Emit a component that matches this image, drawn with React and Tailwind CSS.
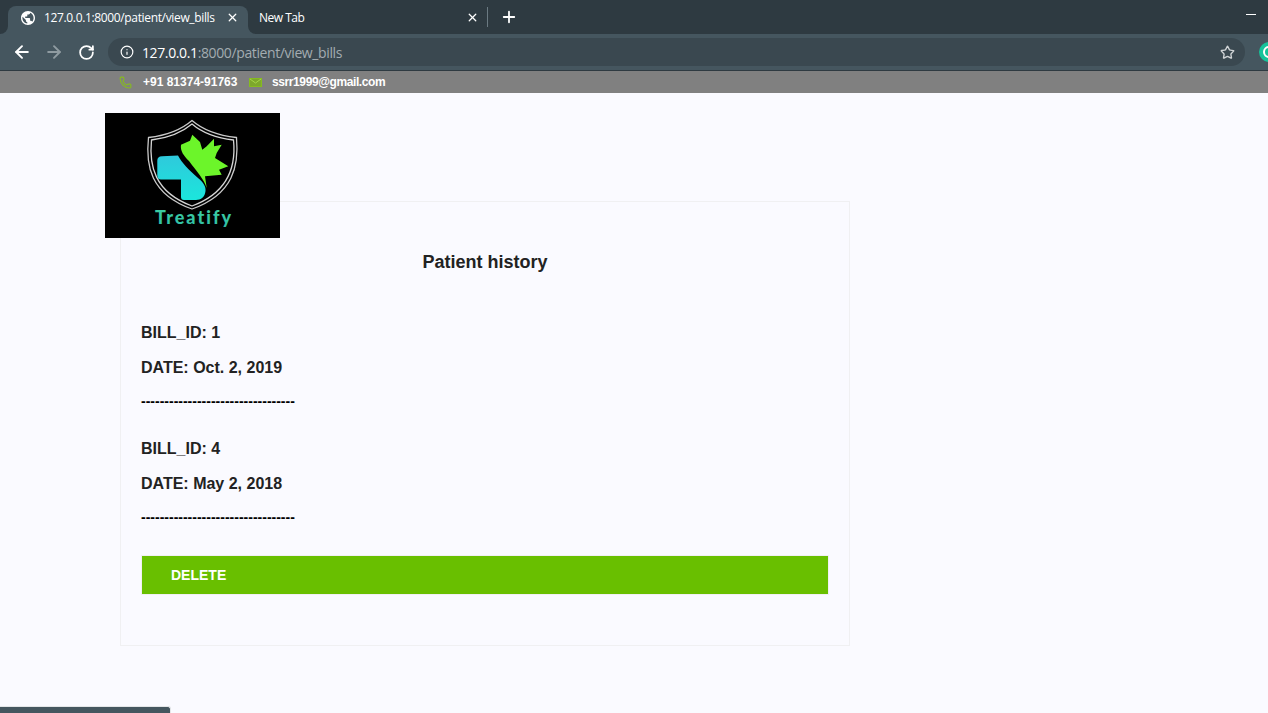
import { ArrowLeft, ArrowRight, RotateCw, Info, Star, X, Plus, Phone } from 'lucide-react'

const bills = [
  { id: 1, date: 'Oct. 2, 2019' },
  { id: 4, date: 'May 2, 2018' },
]

function GlobeIcon() {
  return (
    <svg viewBox="2 2 20 20" className="w-[14px] h-[14px] shrink-0" fill="#fff">
      <path d="M12 2C6.48 2 2 6.48 2 12s4.48 10 10 10 10-4.48 10-10S17.52 2 12 2zm-1 17.93c-3.95-.49-7-3.85-7-7.93 0-.62.08-1.21.21-1.79L9 15v1c0 1.1.9 2 2 2v1.93zm6.9-2.54c-.26-.81-1-1.39-1.9-1.39h-1v-3c0-.55-.45-1-1-1H8v-2h2c.55 0 1-.45 1-1V7h2c1.1 0 2-.9 2-2v-.41c2.93 1.19 5 4.06 5 7.41 0 2.08-.8 3.97-2.1 5.39z" />
    </svg>
  )
}

function MailIcon() {
  return (
    <svg viewBox="0 0 13 9" className="w-[13px] h-[9px] shrink-0">
      <rect x="0.5" y="0.5" width="12" height="8" fill="#7da82c" stroke="#86bc1e" />
      <path d="M1 1l5.5 4L12 1" fill="none" stroke="#a6d64a" strokeWidth="1" />
    </svg>
  )
}

function Logo() {
  return (
    <svg viewBox="0 0 175 125" className="absolute left-[105px] top-[113px] w-[175px] h-[125px] bg-black">
      <defs>
        <linearGradient id="crossFill" x1="0" y1="0" x2="0" y2="1">
          <stop offset="0" stopColor="#2fc9dc" />
          <stop offset="1" stopColor="#1be6dc" />
        </linearGradient>
        <linearGradient id="nameFill" x1="0" y1="0" x2="0" y2="1">
          <stop offset="0" stopColor="#3fcf9f" />
          <stop offset="1" stopColor="#2fbfa8" />
        </linearGradient>
      </defs>
      <path
        d="M87 7.500C76 17 61 22.500 43.500 24.500C40.500 52 45 81 87 96C129 81 134 52 131.500 24.500C113 22.500 98 17 87 7.500Z"
        fill="none"
        stroke="#c9c9c9"
        strokeWidth="1.3"
      />
      <path
        d="M87 11C77 19.500 63 25 46.500 27C44 52 49 79 87 93C125 79 131 52 128.500 27C111 25 97 19.500 87 11Z"
        fill="none"
        stroke="#d5d5d5"
        strokeWidth="1.3"
      />
      <path
        d="M57 43.300L73 42.500C77 50 83 56 93 65C99 70 101 74 100.500 78C100 84 96 87 91 87L79 87Q76 87 76 84L76 66.500L56 66.500Q52.300 66.500 52.300 62.500L52.300 47.500Q52.300 43.500 57 43.300Z"
        fill="url(#crossFill)"
      />
      <path
        d="M76 31.700L85 27.700L87.300 21.700L95 29L97.300 36.700L101.700 33.300L109 25.700L109 33.300L116.700 31.700L111.700 40L110 45L123.300 53.300L114 56.700L116.700 61.700L100 63.300L101.700 75C99 66 92 59 84 48C79 43 75 38 76 31.700Z"
        fill="#6cf52a"
      />
      <text x="50" y="110.500" fontFamily="Lato, sans-serif" fontWeight="900" fontSize="18" letterSpacing="2" fill="url(#nameFill)">
        Treatify
      </text>
    </svg>
  )
}

function TabStrip() {
  return (
    <div className="h-[34px] bg-[#2e3a41] flex items-end pl-2 relative text-white text-[12px] font-['Open_Sans','Noto_Sans',sans-serif]">
      <div className="relative w-[240px] h-[28px] bg-[#45565f] rounded-t-lg flex items-center pl-[13px] pr-[9px] pb-[5px]">
        <div className="absolute -left-2 bottom-0 w-2 h-2 bg-[#45565f]">
          <div className="w-2 h-2 bg-[#2e3a41] rounded-br-lg" />
        </div>
        <div className="absolute -right-2 bottom-0 w-2 h-2 bg-[#45565f]">
          <div className="w-2 h-2 bg-[#2e3a41] rounded-bl-lg" />
        </div>
        <GlobeIcon />
        <span className="ml-[9px] flex-1 whitespace-nowrap overflow-hidden tracking-[-0.35px]">127.0.0.1:8000/patient/view_bills</span>
        <X className="w-[13px] h-[13px]" strokeWidth={2.4} />
      </div>
      <div className="w-[239px] h-[28px] flex items-center pl-[11px] pr-[8px] pb-[5px]">
        <span className="flex-1 tracking-[-0.5px]">New Tab</span>
        <X className="w-[13px] h-[13px]" strokeWidth={2.4} />
      </div>
      <div className="w-px h-5 bg-[#6b7a82] mb-[7px]" />
      <Plus className="w-[18px] h-[18px] ml-3 mb-2" strokeWidth={2.4} />
      <div className="absolute right-3 top-[14px] w-[10px] h-px bg-white" />
    </div>
  )
}

function Toolbar() {
  return (
    <div className="h-[37px] bg-[#45565f] border-b border-[#2e3a41] flex items-center pl-3 text-white overflow-hidden">
      <ArrowLeft className="w-5 h-5 shrink-0" strokeWidth={2.3} />
      <ArrowRight className="w-5 h-5 ml-3 shrink-0 text-[#8f9ba1]" strokeWidth={2.3} />
      <RotateCw className="w-[17px] h-[17px] ml-[14px] shrink-0" strokeWidth={2.5} />
      <div className="ml-[13px] w-[1137px] h-7 shrink-0 rounded-full bg-[#3a4850] flex items-center pl-[12px] pr-[10px] text-[14px] font-['Open_Sans','Noto_Sans',sans-serif]">
        <Info className="w-[14px] h-[14px] shrink-0" strokeWidth={2} />
        <span className="ml-2 flex-1 whitespace-nowrap tracking-[-0.38px]">
          127.0.0.1<span className="text-[#a3acb1]">:8000/patient/view_bills</span>
        </span>
        <Star className="w-[15px] h-[15px] text-[#d0d4d6]" strokeWidth={2.2} />
      </div>
      <div className="ml-[14px] w-5 h-5 shrink-0 rounded-full bg-[#15c39a] flex items-center justify-center">
        <div className="w-3 h-3 rounded-full border-2 border-white" />
      </div>
    </div>
  )
}

function ContactBar() {
  return (
    <div className="h-[22px] bg-[#808080] flex items-center pl-[119px] text-white text-[12px] font-bold font-['Liberation_Sans',Arial,sans-serif]">
      <Phone className="w-[13px] h-[13px] shrink-0 text-[#86bc1e]" strokeWidth={2} />
      <span className="ml-[11px] w-[106px]">+91 81374-91763</span>
      <MailIcon />
      <span className="ml-[10px] tracking-[-0.4px]">ssrr1999@gmail.com</span>
    </div>
  )
}

export default function App() {
  return (
    <div className="relative w-[1268px] h-[713px] overflow-hidden bg-[#fafaff] font-['Liberation_Sans',Arial,sans-serif]">
      <TabStrip />
      <Toolbar />
      <ContactBar />
      <Logo />
      <div className="ml-[120px] mt-[108px] w-[730px] h-[445px] border border-[#f0f0f2] px-5 pt-[50px] text-[#222]">
        <h2 className="text-[18px] leading-5 font-bold text-center">Patient history</h2>
        <div className="mt-[52px] flex flex-col gap-[30px] text-[16px] leading-[18px] font-bold">
          {bills.map((b) => (
            <div key={b.id}>
              <p>BILL_ID: {b.id}</p>
              <p className="mt-[17px]">DATE: {b.date}</p>
              <p className="mt-[15px] text-[14px] text-black">---------------------------------</p>
            </div>
          ))}
        </div>
        <button className="w-[688px] h-[40px] mt-[29px] block border border-[#f0f0f2] bg-[#69bf00] text-white text-left pl-[29px] text-[14px] font-bold uppercase">
          Delete
        </button>
      </div>
      <div className="absolute left-0 bottom-0 w-[171px] h-[7px] bg-[#45565f] border-t border-r border-[#e4e6e8] rounded-tr-[3px]" />
    </div>
  )
}
